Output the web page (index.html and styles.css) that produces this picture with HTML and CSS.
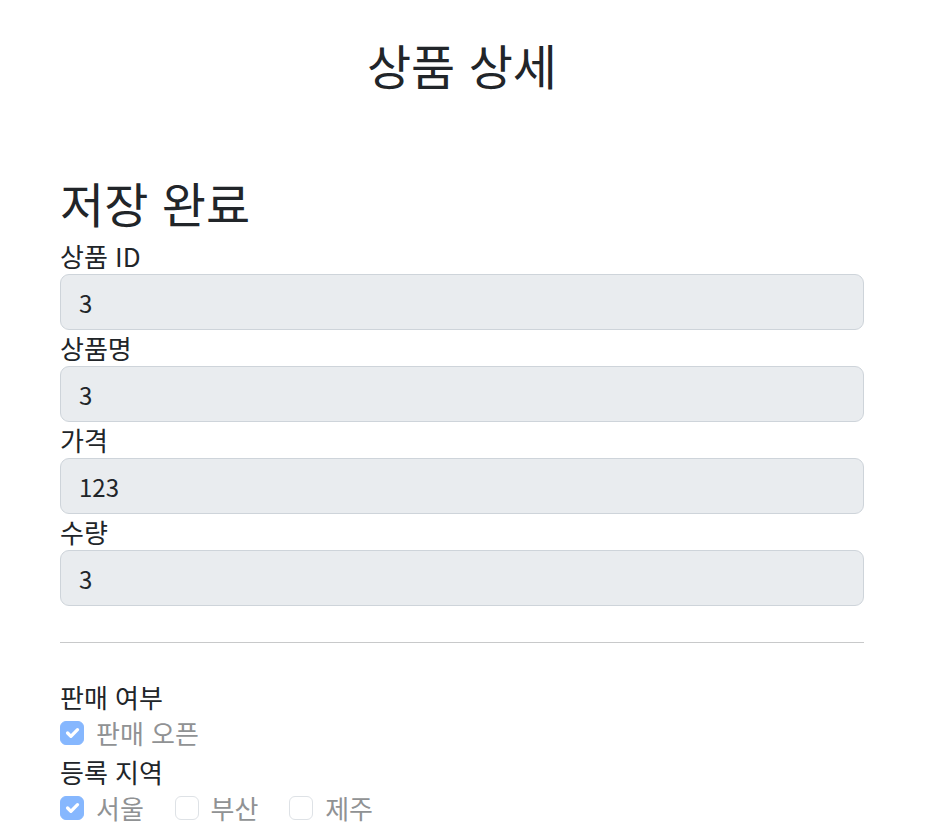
FILE: index.html
```html
<!DOCTYPE html>
<html lang="ko">
<head>
<meta charset="utf-8">
<title>상품 상세</title>
<link rel="stylesheet" href="styles.css">
</head>
<body>
<div class="container">
  <div class="header">
    <h2 class="title">상품 상세</h2>
  </div>
  <h2 class="status">저장 완료</h2>

  <div class="field">
    <label class="label" for="itemId">상품 ID</label>
    <input id="itemId" class="form-control" type="text" value="3" readonly>
  </div>
  <div class="field">
    <label class="label" for="itemName">상품명</label>
    <input id="itemName" class="form-control" type="text" value="3" readonly>
  </div>
  <div class="field">
    <label class="label" for="price">가격</label>
    <input id="price" class="form-control" type="text" value="123" readonly>
  </div>
  <div class="field">
    <label class="label" for="quantity">수량</label>
    <input id="quantity" class="form-control" type="text" value="3" readonly>
  </div>

  <hr class="divider">

  <div class="group">
    <div class="label">판매 여부</div>
    <div class="form-check">
      <span class="check checked"><svg viewBox="0 0 20 20" width="24" height="24"><path d="M6 10l3 3l6-6" fill="none" stroke="#fff" stroke-width="3" stroke-linecap="round" stroke-linejoin="round"/></svg></span>
      <span class="check-label">판매 오픈</span>
    </div>
  </div>

  <div class="group">
    <div class="label">등록 지역</div>
    <div class="form-check inline">
      <span class="check checked"><svg viewBox="0 0 20 20" width="24" height="24"><path d="M6 10l3 3l6-6" fill="none" stroke="#fff" stroke-width="3" stroke-linecap="round" stroke-linejoin="round"/></svg></span>
      <span class="check-label">서울</span>
    </div>
    <div class="form-check inline">
      <span class="check"></span>
      <span class="check-label">부산</span>
    </div>
    <div class="form-check inline">
      <span class="check"></span>
      <span class="check-label">제주</span>
    </div>
  </div>
</div>
</body>
</html>
```

FILE: styles.css
```css
* { box-sizing: border-box; }

html, body {
  margin: 0;
  padding: 0;
  background: #fff;
}

body {
  font-family: "Noto Sans CJK KR", "Noto Sans", "Liberation Sans", sans-serif;
  font-size: 24px;
  line-height: 1.5;
  color: #212529;
}

.container {
  width: 804px;
  margin-left: 60px;
}

.header {
  text-align: center;
  padding-top: 40px;
  padding-bottom: 78px;
}

h2 {
  font-size: 48px;
  line-height: 48px;
  font-weight: 400;
  margin: 0 0 12px;
}

.field {
  display: flex;
  flex-direction: column;
}

.label {
  display: block;
  height: 36px;
  line-height: 36px;
  font-size: 26px;
}

.form-control {
  display: block;
  width: 100%;
  height: 56px;
  padding: 9px 18px;
  font-family: inherit;
  font-size: 24px;
  line-height: 36px;
  color: #212529;
  background: #e9ecef;
  border: 1px solid #ced4da;
  border-radius: 9px;
  outline: none;
}

.divider {
  margin: 36px 0;
  border: 0;
  border-top: 1px solid #c8c9ca;
  height: 0;
}

.form-check {
  display: flex;
  align-items: flex-start;
  height: 36px;
  margin-bottom: 3px;
}

.form-check.inline {
  display: inline-flex;
  margin-right: 24px;
  margin-bottom: 0;
}

.check {
  width: 24px;
  height: 24px;
  margin-top: 6px;
  margin-right: 12px;
  border: 1px solid #dee2e6;
  border-radius: 6px;
  background: #fff;
  display: flex;
  align-items: center;
  justify-content: center;
  flex: none;
}

.check.checked {
  background: #86b7fe;
  border-color: #86b7fe;
}

.check svg {
  display: block;
}

.check-label {
  color: #909294;
  font-size: 26px;
  line-height: 36px;
}
```
